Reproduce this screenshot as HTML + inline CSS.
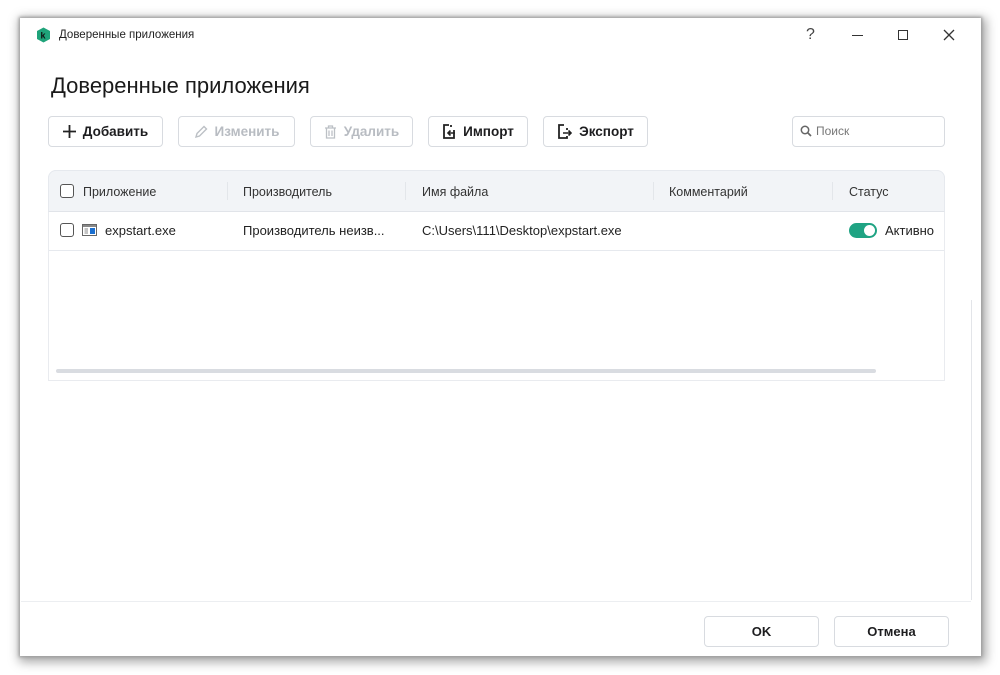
<!DOCTYPE html>
<html><head><meta charset="utf-8"><style>
*{box-sizing:border-box;margin:0;padding:0}
body{width:1000px;height:675px;background:#fff;position:relative;overflow:hidden;font-family:"Liberation Sans","Noto Sans CJK SC",sans-serif;color:#1d1d1f}
.win{position:absolute;left:20px;top:18px;width:961px;height:638px;background:#fff;box-shadow:0 0 3px 1px #9a9a9a,2px 3px 10px 3px rgba(0,0,0,.35)}
.abs{position:absolute}
.btn{position:absolute;height:31px;border:1px solid #d8dbe0;border-radius:4px;background:#fff;font-size:13.5px;font-weight:bold;display:flex;align-items:center;justify-content:center;gap:7px}
.dis{color:#b8bcc2}
.hd{position:absolute;top:185px;font-size:12.5px;color:#333}
.sep{position:absolute;top:182px;width:1px;height:18px;background:#e3e6ea}
.cb{position:absolute;width:14px;height:14px;border:1.3px solid #555;border-radius:3px;background:#fff}
.cell{position:absolute;top:223px;font-size:13px;color:#222}
</style></head><body>
<div class="win"></div>
<!-- title bar -->
<svg class="abs" style="left:36px;top:27px" width="15" height="16" viewBox="0 0 15 16"><path d="M7.5 0.5 L14 4 V12 L7.5 15.5 L1 12 V4Z" fill="#1fa37a"/><text x="4.5" y="11.5" font-size="9" font-family="Liberation Sans" fill="#111" font-weight="bold">k</text></svg>
<div class="abs" style="left:59px;top:29px;font-size:11.5px;color:#222">Доверенные приложения</div>
<div class="abs" style="left:806px;top:26px;font-size:16px;color:#444">?</div>
<div class="abs" style="left:852px;top:35px;width:11px;height:1.3px;background:#333"></div>
<div class="abs" style="left:898px;top:30px;width:10px;height:10px;border:1.3px solid #333"></div>
<svg class="abs" style="left:943px;top:29px" width="12" height="12"><path d="M1 1L11 11M11 1L1 11" stroke="#333" stroke-width="1.3"/></svg>
<div class="abs" style="left:51px;top:73px;font-size:22px;color:#1a1a1a">Доверенные приложения</div>
<!-- toolbar -->
<div class="btn" style="left:48px;top:116px;width:115px"><svg width="13" height="13"><path d="M6.5 0V13M0 6.5H13" stroke="#222" stroke-width="1.8"/></svg>Добавить</div>
<div class="btn dis" style="left:178px;top:116px;width:117px"><svg width="14" height="14"><path d="M2 12L3 8.5L10 1.5L12.5 4L5.5 11Z" fill="none" stroke="#bcc0c5" stroke-width="1.4"/></svg>Изменить</div>
<div class="btn dis" style="left:310px;top:116px;width:103px"><svg width="13" height="14"><path d="M1 3H12M4.5 3V1H8.5V3M2.5 3V13H10.5V3M5 5.5V11M8 5.5V11" fill="none" stroke="#bcc0c5" stroke-width="1.3"/></svg>Удалить</div>
<div class="btn" style="left:428px;top:116px;width:100px"><svg width="14" height="15"><path d="M7 1H2V14H12V6M9 1V3" fill="none" stroke="#222" stroke-width="1.8"/><path d="M13 9H6M8.5 6.5L6 9L8.5 11.5" fill="none" stroke="#222" stroke-width="1.6"/></svg>Импорт</div>
<div class="btn" style="left:543px;top:116px;width:105px"><svg width="15" height="15"><path d="M7 1H2V14H10V12M10 6V4" fill="none" stroke="#222" stroke-width="1.8"/><path d="M6 9H14M11.5 6.5L14 9L11.5 11.5" fill="none" stroke="#222" stroke-width="1.6"/></svg>Экспорт</div>
<div class="abs" style="left:792px;top:116px;width:153px;height:31px;border:1px solid #d8dbe0;border-radius:4px;font-size:12px;color:#777;padding:7px 0 0 23px">Поиск</div>
<svg class="abs" style="left:800px;top:125px" width="12" height="12"><circle cx="5" cy="5" r="3.7" fill="none" stroke="#666" stroke-width="1.5"/><path d="M7.5 7.5L11 11" stroke="#666" stroke-width="1.7"/></svg>
<!-- table -->
<div class="abs" style="left:48px;top:170px;width:897px;height:211px;border:1px solid #e9ebef;border-top-left-radius:8px;border-top-right-radius:8px"></div>
<div class="abs" style="left:48px;top:170px;width:897px;height:42px;background:#f2f4f7;border:1px solid #e6e9ee;border-bottom-color:#e1e4e9;border-top-left-radius:8px;border-top-right-radius:8px"></div>
<div class="cb" style="left:60px;top:184px"></div>
<div class="hd" style="left:83px">Приложение</div>
<div class="sep" style="left:227px"></div><div class="hd" style="left:243px">Производитель</div>
<div class="sep" style="left:405px"></div><div class="hd" style="left:422px">Имя файла</div>
<div class="sep" style="left:653px"></div><div class="hd" style="left:669px">Комментарий</div>
<div class="sep" style="left:832px"></div><div class="hd" style="left:849px">Статус</div>
<div class="abs" style="left:49px;top:250px;width:895px;height:1px;background:#e6e9ee"></div>
<div class="cb" style="left:60px;top:223px"></div>
<svg class="abs" style="left:82px;top:224px" width="15" height="12"><rect x=".5" y=".5" width="14" height="11" fill="#fff" stroke="#666"/><rect x="1" y="1" width="13" height="2" fill="#888"/><rect x="8" y="4" width="5" height="6" fill="#1a6fd0"/><path d="M2.5 5H6M2.5 7H6M2.5 9H6" stroke="#888"/></svg>
<div class="cell" style="left:105px">expstart.exe</div>
<div class="cell" style="left:243px">Производитель неизв...</div>
<div class="cell" style="left:422px">C:\Users\111\Desktop\expstart.exe</div>
<div class="abs" style="left:849px;top:223px;width:28px;height:15px;border-radius:8px;background:#1fa383"></div>
<div class="abs" style="left:864px;top:225px;width:11px;height:11px;border-radius:50%;background:#fff"></div>
<div class="cell" style="left:885px">Активно</div>
<div class="abs" style="left:56px;top:369px;width:820px;height:4px;border-radius:2px;background:#d9dce1"></div>
<div class="abs" style="left:971px;top:300px;width:1px;height:300px;background:#e3e5e9"></div>
<!-- footer -->
<div class="abs" style="left:21px;top:601px;width:950px;height:1px;background:#eceef1"></div>
<div class="btn" style="left:704px;top:616px;width:115px;height:31px;font-size:13px">OK</div>
<div class="btn" style="left:834px;top:616px;width:115px;height:31px;font-size:13px">Отмена</div>
</body></html>
